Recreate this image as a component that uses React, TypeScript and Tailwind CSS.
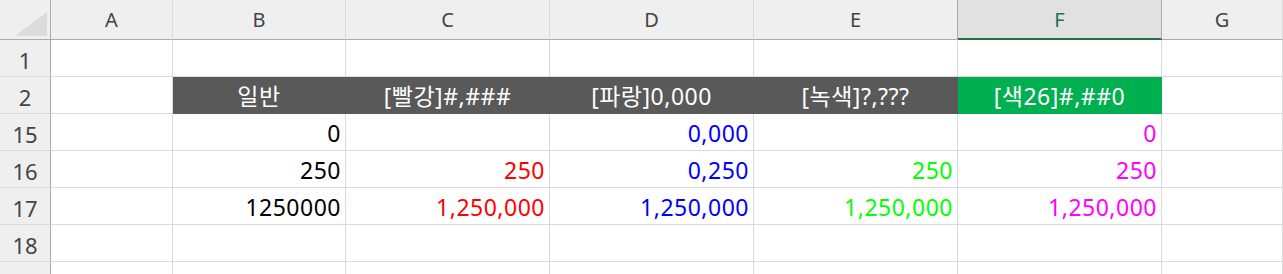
import React from "react";

const font = { fontFamily: '"Noto Sans", "Noto Sans CJK KR", sans-serif' };

type Cell = { text?: string; color?: string; bg?: string };

const rows: { num: string; cells: Cell[] }[] = [
  { num: "1", cells: [{}, {}, {}, {}, {}, {}, {}] },
  {
    num: "2",
    cells: [
      {},
      { text: "일반", bg: "dark" },
      { text: "[빨강]#,###", bg: "dark" },
      { text: "[파랑]0,000", bg: "dark" },
      { text: "[녹색]?,???", bg: "dark" },
      { text: "[색26]#,##0", bg: "green" },
      {},
    ],
  },
  {
    num: "15",
    cells: [
      {},
      { text: "0", color: "black" },
      {},
      { text: "0,000", color: "blue" },
      {},
      { text: "0", color: "magenta" },
      {},
    ],
  },
  {
    num: "16",
    cells: [
      {},
      { text: "250", color: "black" },
      { text: "250", color: "red" },
      { text: "0,250", color: "blue" },
      { text: "250", color: "green" },
      { text: "250", color: "magenta" },
      {},
    ],
  },
  {
    num: "17",
    cells: [
      {},
      { text: "1250000", color: "black" },
      { text: "1,250,000", color: "red" },
      { text: "1,250,000", color: "blue" },
      { text: "1,250,000", color: "green" },
      { text: "1,250,000", color: "magenta" },
      {},
    ],
  },
  { num: "18", cells: [{}, {}, {}, {}, {}, {}, {}] },
  { num: "19", cells: [{}, {}, {}, {}, {}, {}, {}] },
];

const colorClass: Record<string, string> = {
  black: "text-black",
  red: "text-[#ff0000]",
  blue: "text-[#0000ff]",
  green: "text-[#00ff00]",
  magenta: "text-[#ff00ff]",
};

function DataCell({ cell }: { cell: Cell }) {
  let cls =
    "h-[37px] border-r border-b border-[#dadada] bg-white flex items-center justify-end pr-[4px] pt-[3px] text-[23px] tracking-[0.5px] leading-none";
  if (cell.bg === "dark")
    cls =
      "h-[37px] border-r border-b border-[#595959] bg-[#595959] flex items-center justify-center pt-[3px] text-[23px] tracking-[0.5px] leading-none text-white";
  else if (cell.bg === "green")
    cls =
      "h-[37px] border-r border-b border-[#00b050] bg-[#00b050] flex items-center justify-center pt-[3px] text-[23px] tracking-[0.5px] leading-none text-white";
  return (
    <div className={cls + (cell.color ? " " + colorClass[cell.color] : "")}>
      {cell.text}
    </div>
  );
}

export default function App() {
  const letters = ["A", "B", "C", "D", "E", "F", "G"];
  return (
    <div className="w-[1283px] h-[274px] overflow-hidden bg-white" style={font}>
      <div className="grid grid-cols-[51px_122px_173px_204px_204px_204px_204px_121px]">
        <div className="h-[40px] bg-[#efefef] border-r border-b border-[#ababab] relative">
          <svg className="absolute left-0 top-0" width="50" height="39" viewBox="0 0 50 39">
            <polygon points="15,36 47,12 47,36" fill="#dcdcdc" />
          </svg>
        </div>
        {letters.map((l) =>
          l === "F" ? (
            <div
              key={l}
              className="h-[40px] bg-[#e1e1e1] border-r border-[#ababab] border-b-2 border-b-[#217346] flex items-center justify-center pt-[1px] text-[20px] leading-none text-[#217346]"
            >
              {l}
            </div>
          ) : (
            <div
              key={l}
              className={
                "h-[40px] bg-[#efefef] border-r border-b border-b-[#ababab] flex items-center justify-center pt-[1px] text-[20px] leading-none text-[#444444] " +
                (l === "E" ? "border-r-[#ababab]" : "border-r-[#dadada]")
              }
            >
              {l}
            </div>
          )
        )}
        {rows.map((r) => (
          <React.Fragment key={r.num}>
            <div className="h-[37px] bg-[#efefef] border-r border-r-[#ababab] border-b border-b-[#dadada] flex items-center justify-center pt-[3px] text-[22px] leading-none text-[#444444]">
              {r.num}
            </div>
            {r.cells.map((c, i) => (
              <DataCell key={i} cell={c} />
            ))}
          </React.Fragment>
        ))}
      </div>
    </div>
  );
}
